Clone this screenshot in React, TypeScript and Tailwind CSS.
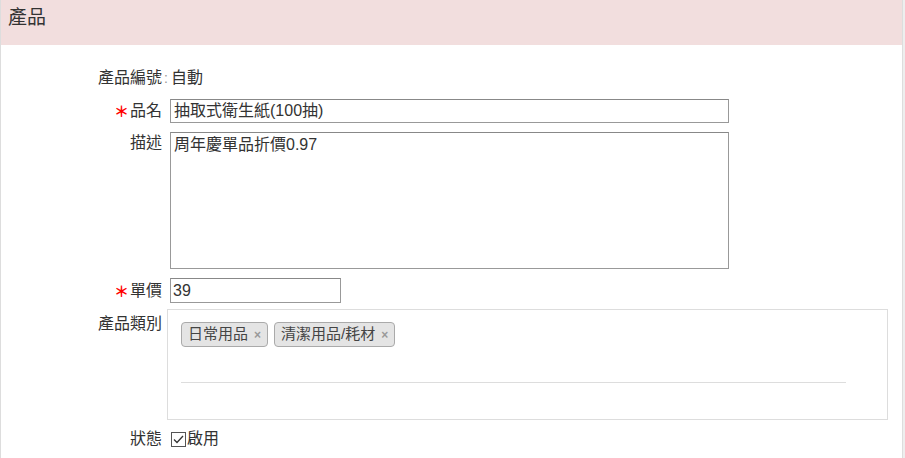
import React from "react";

const font = {
  fontFamily: '"Liberation Sans", "Noto Sans CJK TC", sans-serif',
};

function Req() {
  return (
    <span className="inline-block text-[#ff0000] text-[15px] font-bold leading-none mr-[1px] translate-y-[1px]">
      ＊
    </span>
  );
}

function Tag({ label }: { label: string }) {
  return (
    <span className="inline-flex items-center h-[25px] px-[6px] gap-[6px] rounded-[4px] border border-[#aaa] bg-[#e4e4e4] text-[15px] text-[#444]">
      {label}
      <span className="text-[12px] text-[#999] font-bold">×</span>
    </span>
  );
}

export default function App() {
  return (
    <div className="flex h-[458px] w-[905px] bg-white text-[#333]" style={font}>
      <div className="w-[903px] border-l border-r border-[#ddd] flex flex-col">
        <div className="h-[45px] bg-[#f2dede] px-[7px] pt-[4px] text-[19px] leading-[28px] text-[#333]">
          產品
        </div>
        <div className="flex flex-col pt-[22px] text-[16px]">
          <div className="flex leading-[22px]">
            <div className="w-[161px] text-right">產品編號</div>
            <div className="text-[#999] ml-[2px] w-[7px] text-[14px]">:</div>
            <div>自動</div>
          </div>

          <div className="flex items-center mt-[10px]">
            <div className="w-[161px] text-right leading-[22px]">
              <Req />品名
            </div>
            <div className="ml-[8px] w-[559px] h-[24px] border border-[#999] border-t-[#888] px-[3px] leading-[22px]">
              抽取式衛生紙(100抽)
            </div>
          </div>

          <div className="flex items-start mt-[9px]">
            <div className="w-[161px] text-right leading-[22px]">描述</div>
            <div className="ml-[8px] w-[559px] h-[137px] border border-[#999] border-t-[#888] px-[3px] pt-[1px] leading-[22px]">
              周年慶單品折價0.97
            </div>
          </div>

          <div className="flex items-center mt-[9px]">
            <div className="w-[161px] text-right leading-[22px]">
              <Req />單價
            </div>
            <div className="ml-[8px] w-[171px] h-[25px] border border-[#999] border-t-[#888] px-[2px] leading-[23px]">
              39
            </div>
          </div>

          <div className="flex items-start mt-[6px]">
            <div className="w-[161px] text-right leading-[22px] mt-[4px]">產品類別</div>
            <div className="ml-[5px] w-[721px] h-[111px] border border-[#ddd] pt-[12px] px-[13px]">
              <div className="flex gap-[6px]">
                <Tag label="日常用品" />
                <Tag label="清潔用品/耗材" />
              </div>
              <div className="mt-[35px] w-[665px] h-px bg-[#ddd]" />
            </div>
          </div>

          <div className="flex items-center mt-[8px] leading-[22px]">
            <div className="w-[161px] text-right">狀態</div>
            <div className="ml-[9px] flex items-center">
              <svg width="15" height="15" viewBox="0 0 15 15" className="mr-[1px]">
                <rect x="0.5" y="0.5" width="14" height="14" fill="#fff" stroke="#555" />
                <path d="M3 7.5 L6 10.5 L12 4" fill="none" stroke="#333" strokeWidth="1.3" />
              </svg>
              <span>啟用</span>
            </div>
          </div>
        </div>
      </div>
      <div className="flex-1 bg-[#eee]" />
    </div>
  );
}
